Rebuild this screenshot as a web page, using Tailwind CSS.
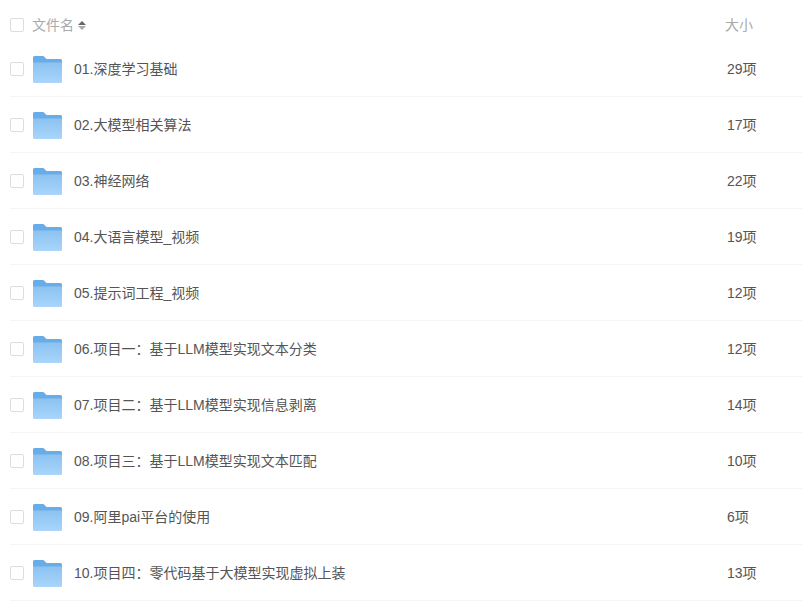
<!DOCTYPE html>
<html><head><meta charset="utf-8"><script src="https://cdn.jsdelivr.net/npm/@tailwindcss/browser@4"></script></head>
<body class="bg-white font-['Liberation_Sans','Noto_Sans_CJK_SC',sans-serif] text-[14px] text-[#555555] w-[802px] h-[602px] overflow-hidden">
<svg width="0" height="0" class="absolute"><defs>
<linearGradient id="f" x1="0" y1="0" x2="0" y2="1"><stop offset="0" stop-color="#8cc2f1"/><stop offset="1" stop-color="#a8d5fc"/></linearGradient>
<symbol id="folder" viewBox="0 0 29 27" preserveAspectRatio="none"><path d="M0 1.5Q0 0 1.5 0H10.5L13.5 3H27.5Q29 3 29 4.5V8H0Z" fill="#68ade8"/><path d="M0 6.5H29V25.5Q29 27 27.5 27H1.5Q0 27 0 25.5Z" fill="url(#f)"/></symbol>
</defs></svg>
<div class="flex h-[40px] mt-[5px] pl-[10px] items-center text-[#aaaaaa]">
<span class="w-[14px] h-[14px] border border-[#dddddd] rounded-[2px] bg-white shrink-0"></span>
<span class="ml-[8px]">文件名</span>
<span class="ml-[4px] flex flex-col gap-[1px]"><span class="w-0 h-0 border-x-[4px] border-x-transparent border-b-[4px] border-b-[#666]"></span><span class="w-0 h-0 border-x-[4px] border-x-transparent border-t-[4px] border-t-[#aaa]"></span></span>
<span class="ml-auto w-[77px]">大小</span>
</div>
<div class="ml-[10px] -mt-[4px]">
<div class="flex h-[56px] pt-[2px] items-center border-b border-[#f5f5f5]"><span class="w-[14px] h-[14px] -mt-[2px] border border-[#dddddd] rounded-[2px] shrink-0"></span><svg class="ml-[9px] mr-[12px] w-[29px] h-[27px]"><use href="#folder"/></svg><span>01.深度学习基础</span><span class="ml-auto w-[75px]">29项</span></div>
<div class="flex h-[56px] pt-[2px] items-center border-b border-[#f5f5f5]"><span class="w-[14px] h-[14px] -mt-[2px] border border-[#dddddd] rounded-[2px] shrink-0"></span><svg class="ml-[9px] mr-[12px] w-[29px] h-[27px]"><use href="#folder"/></svg><span>02.大模型相关算法</span><span class="ml-auto w-[75px]">17项</span></div>
<div class="flex h-[56px] pt-[2px] items-center border-b border-[#f5f5f5]"><span class="w-[14px] h-[14px] -mt-[2px] border border-[#dddddd] rounded-[2px] shrink-0"></span><svg class="ml-[9px] mr-[12px] w-[29px] h-[27px]"><use href="#folder"/></svg><span>03.神经网络</span><span class="ml-auto w-[75px]">22项</span></div>
<div class="flex h-[56px] pt-[2px] items-center border-b border-[#f5f5f5]"><span class="w-[14px] h-[14px] -mt-[2px] border border-[#dddddd] rounded-[2px] shrink-0"></span><svg class="ml-[9px] mr-[12px] w-[29px] h-[27px]"><use href="#folder"/></svg><span>04.大语言模型_视频</span><span class="ml-auto w-[75px]">19项</span></div>
<div class="flex h-[56px] pt-[2px] items-center border-b border-[#f5f5f5]"><span class="w-[14px] h-[14px] -mt-[2px] border border-[#dddddd] rounded-[2px] shrink-0"></span><svg class="ml-[9px] mr-[12px] w-[29px] h-[27px]"><use href="#folder"/></svg><span>05.提示词工程_视频</span><span class="ml-auto w-[75px]">12项</span></div>
<div class="flex h-[56px] pt-[2px] items-center border-b border-[#f5f5f5]"><span class="w-[14px] h-[14px] -mt-[2px] border border-[#dddddd] rounded-[2px] shrink-0"></span><svg class="ml-[9px] mr-[12px] w-[29px] h-[27px]"><use href="#folder"/></svg><span>06.项目一：基于LLM模型实现文本分类</span><span class="ml-auto w-[75px]">12项</span></div>
<div class="flex h-[56px] pt-[2px] items-center border-b border-[#f5f5f5]"><span class="w-[14px] h-[14px] -mt-[2px] border border-[#dddddd] rounded-[2px] shrink-0"></span><svg class="ml-[9px] mr-[12px] w-[29px] h-[27px]"><use href="#folder"/></svg><span>07.项目二：基于LLM模型实现信息剥离</span><span class="ml-auto w-[75px]">14项</span></div>
<div class="flex h-[56px] pt-[2px] items-center border-b border-[#f5f5f5]"><span class="w-[14px] h-[14px] -mt-[2px] border border-[#dddddd] rounded-[2px] shrink-0"></span><svg class="ml-[9px] mr-[12px] w-[29px] h-[27px]"><use href="#folder"/></svg><span>08.项目三：基于LLM模型实现文本匹配</span><span class="ml-auto w-[75px]">10项</span></div>
<div class="flex h-[56px] pt-[2px] items-center border-b border-[#f5f5f5]"><span class="w-[14px] h-[14px] -mt-[2px] border border-[#dddddd] rounded-[2px] shrink-0"></span><svg class="ml-[9px] mr-[12px] w-[29px] h-[27px]"><use href="#folder"/></svg><span>09.阿里pai平台的使用</span><span class="ml-auto w-[75px]">6项</span></div>
<div class="flex h-[56px] pt-[2px] items-center border-b border-[#f5f5f5]"><span class="w-[14px] h-[14px] -mt-[2px] border border-[#dddddd] rounded-[2px] shrink-0"></span><svg class="ml-[9px] mr-[12px] w-[29px] h-[27px]"><use href="#folder"/></svg><span>10.项目四：零代码基于大模型实现虚拟上装</span><span class="ml-auto w-[75px]">13项</span></div>
</div>
</body></html>
